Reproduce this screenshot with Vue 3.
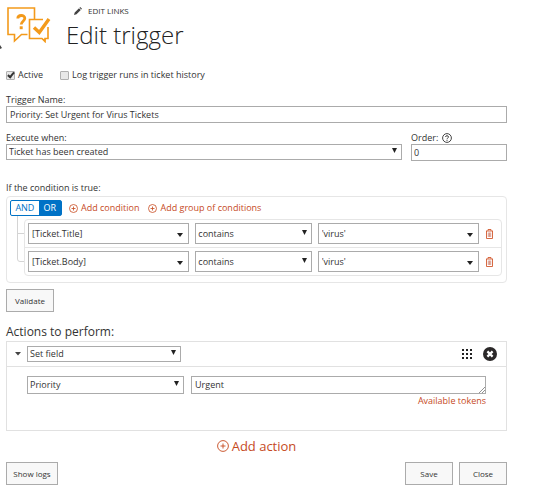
<script setup>
import { ref } from 'vue'

const active = ref(true)
const logRuns = ref(false)
const name = ref('Priority: Set Urgent for Virus Tickets')
const order = ref('0')
const operator = ref('OR')
const actionText = ref('Urgent')
const conditions = ref([
  { id: 1, field: '[Ticket.Title]', test: 'contains', value: "'virus'" },
  { id: 2, field: '[Ticket.Body]', test: 'contains', value: "'virus'" },
])
</script>

<template>
  <main class="page">
    <header class="header">
      <svg class="logo" viewBox="0 0 44 36" fill="none" stroke="#f39a1b" stroke-width="1.6">
        <path d="M20.500 27.500 L14.500 27.500 L7.500 34 L7.500 27.500 L1 27.500 L1 1 L27.500 1 L27.500 12" />
        <path d="M36 12.500 L22.500 12.500 L22.500 31.500 L35 31.500 L38 34.500 L38 31.500 L41 31.500 L41 20" />
        <path d="M35 32 L38.500 35 L38.500 32 Z" fill="#f39a1b" stroke="none" />
        <path d="M10.800 11.500 C10.800 7.600 17.800 7.500 17.800 11.300 C17.800 14.300 14.200 14.200 14.200 17.600" stroke-width="2.800" />
        <path d="M14.200 19.300 V22.200" stroke-width="3" />
        <path d="M27 20.500 L32.300 25.500 L42 12" stroke-width="3.400" />
      </svg>
      <svg class="edge-mark" viewBox="0 0 2 4"><path d="M0 0 L2 3 L0 4 Z" fill="#444" /></svg>
      <div class="heading">
        <a class="edit-links" href="#">
          <svg class="pencil" viewBox="0 0 8 8" fill="#444"><path d="M0 8 L0.700 5.500 L5 1.200 L6.800 3 L2.500 7.300 Z M5.500 0.700 L6.200 0 L8 1.800 L7.300 2.500 Z" /></svg>
          <span>EDIT LINKS</span>
        </a>
        <h1>Edit trigger</h1>
      </div>
    </header>

    <div class="checks">
      <label class="check"><input v-model="active" type="checkbox"><span>Active</span></label>
      <label class="check"><input v-model="logRuns" type="checkbox"><span>Log trigger runs in ticket history</span></label>
    </div>

    <div class="field name-field">
      <label for="trigger-name">Trigger Name:</label>
      <input id="trigger-name" v-model="name" class="box roomy" type="text">
    </div>

    <div class="pair">
      <div class="field grow">
        <label for="execute">Execute when:</label>
        <span class="pick slim">
          <select id="execute" class="box"><option>Ticket has been created</option></select>
          <svg class="arrow" viewBox="0 0 5 5"><path d="M0 0H5L2.500 5Z" /></svg>
        </span>
      </div>
      <div class="field order">
        <label for="order">Order:
          <svg class="help" viewBox="0 0 10 10" fill="none" stroke="#444"><circle cx="5" cy="5" r="4.400" /><path d="M3.500 4C3.500 2.200 6.500 2.300 6.500 4C6.500 5 5 5 5 6.200M5 6.900V7.900" /></svg>
        </label>
        <input id="order" v-model="order" class="box" type="text">
      </div>
    </div>

    <p class="caption">If the condition is true:</p>
    <section class="builder">
      <div class="tools">
        <div class="toggle">
          <button v-for="op in ['AND', 'OR']" :key="op" type="button" :class="{ on: operator === op }" @click="operator = op">{{ op }}</button>
        </div>
        <button v-for="t in ['Add condition', 'Add group of conditions']" :key="t" type="button" class="add">
          <svg viewBox="0 0 9 9" fill="none" stroke="currentColor" stroke-width="0.800"><circle cx="4.500" cy="4.500" r="4" /><path d="M2.500 4.500H6.500M4.500 2.500V6.500" /></svg>
          <span>{{ t }}</span>
        </button>
      </div>
      <div class="tree">
        <svg class="branch" viewBox="0 0 7 46" fill="none" stroke="#d4d4d4"><path d="M0.500 0V43Q0.500 45.500 3 45.500H7M0.500 17.500H7" /></svg>
        <ul class="rules">
          <li v-for="c in conditions" :key="c.id" class="rule">
            <span class="pick wide">
              <select class="box" aria-label="Field"><option>{{ c.field }}</option></select>
              <svg class="arrow" viewBox="0 0 6 4"><path d="M0 0H6L3 4Z" /></svg>
            </span>
            <span class="pick">
              <select class="box" aria-label="Comparison"><option>{{ c.test }}</option></select>
              <svg class="arrow" viewBox="0 0 5 5"><path d="M0 0H5L2.500 5Z" /></svg>
            </span>
            <span class="pick wide">
              <select class="box" aria-label="Value"><option>{{ c.value }}</option></select>
              <svg class="arrow" viewBox="0 0 6 4"><path d="M0 0H6L3 4Z" /></svg>
            </span>
            <button type="button" class="trash" aria-label="Delete condition">
              <svg viewBox="0 0 8 10" fill="none" stroke="#d2592f" stroke-width="0.900"><path d="M0.500 2H7.500M2.500 1.800V0.500H5.500V1.800M1 2V9.500H7V2" /><path d="M2.800 3.500V8M4 3.500V8M5.200 3.500V8" stroke="#c6705c" stroke-width="0.700" /></svg>
            </button>
          </li>
        </ul>
      </div>
    </section>

    <button type="button" class="btn">Validate</button>

    <h2>Actions to perform:</h2>
    <section class="panel">
      <div class="panel-head">
        <button type="button" class="fold" aria-label="Collapse action"><svg viewBox="0 0 6 4"><path d="M0 0H6L3 3.500Z" fill="#444" /></svg></button>
        <span class="pick slim kind">
          <select class="box" aria-label="Action type"><option>Set field</option></select>
          <svg class="arrow" viewBox="0 0 5 5"><path d="M0 0H5L2.500 5Z" /></svg>
        </span>
        <button type="button" class="drag" aria-label="Move action">
          <svg viewBox="0 0 10 10" fill="#222"><path d="M0 0h2v2h-2zM4 0h2v2h-2zM8 0h2v2h-2zM0 4h2v2h-2zM4 4h2v2h-2zM8 4h2v2h-2zM0 8h2v2h-2zM4 8h2v2h-2zM8 8h2v2h-2z" /></svg>
        </button>
        <button type="button" class="remove" aria-label="Remove action">
          <svg viewBox="0 0 14 14"><circle cx="7" cy="7" r="7" fill="#2b2829" /><path d="M4.400 4.400L9.600 9.600M9.600 4.400L4.400 9.600" stroke="#fff" stroke-width="2.200" /></svg>
        </button>
      </div>
      <div class="panel-body">
        <span class="pick target">
          <select class="box" aria-label="Field to set"><option>Priority</option></select>
          <svg class="arrow" viewBox="0 0 5 5"><path d="M0 0H5L2.500 5Z" /></svg>
        </span>
        <div class="value">
          <textarea v-model="actionText" class="box" rows="1" aria-label="New value"></textarea>
          <svg class="grip" viewBox="0 0 6 6" stroke="#777" stroke-width="0.800"><path d="M0 6L6 0M3 6L6 3" /></svg>
          <a href="#">Available tokens</a>
        </div>
      </div>
    </section>

    <button type="button" class="add add-action">
      <svg viewBox="0 0 12 12" fill="none" stroke="currentColor" stroke-width="0.900"><circle cx="6" cy="6" r="5.400" /><path d="M3.500 6H8.500M6 3.500V8.500" /></svg>
      <span>Add action</span>
    </button>

    <footer class="footer">
      <button type="button" class="btn logs">Show logs</button>
      <button type="button" class="btn">Save</button>
      <button type="button" class="btn">Close</button>
    </footer>
  </main>
</template>

<style>
body {
  background: #fff;
}
</style>

<style scoped>
* {
  box-sizing: border-box;
}
.page {
  padding: 5px 35px 16px 6px;
  font: 9px/14px "Open Sans", "Noto Sans", sans-serif;
  color: #333;
}
svg {
  display: block;
  flex: none;
}
button,
input,
select,
textarea {
  font: inherit;
  color: inherit;
  margin: 0;
}
button {
  padding: 0;
  border: 0;
  background: none;
  cursor: pointer;
}
a {
  color: inherit;
  text-decoration: none;
}
.header {
  display: flex;
  gap: 15px;
}
.logo {
  width: 44px;
  height: 36px;
  margin: 2px 0 0 1px;
}
.edge-mark {
  position: absolute;
  left: 0;
  top: 45px;
  width: 2px;
  height: 4px;
}
.edit-links {
  display: flex;
  align-items: center;
  gap: 6px;
  height: 12px;
  padding-left: 8px;
  font-size: 8px;
}
.pencil {
  width: 8px;
  height: 8px;
}
h1 {
  margin: 0;
  font-size: 24px;
  font-weight: 300;
  line-height: 36px;
  color: #222;
}
.checks {
  display: flex;
  gap: 17px;
  margin-top: 15px;
}
.check {
  display: flex;
  align-items: center;
  gap: 3px;
}
.check input {
  position: relative;
  width: 9px;
  height: 9px;
  border: 1px solid #b0b0b0;
  border-radius: 1px;
  background: #e8e8e8;
  appearance: none;
}
.check input:checked::before {
  content: "";
  box-sizing: border-box;
  position: absolute;
  left: 2px;
  top: -1px;
  width: 4px;
  height: 7px;
  border: solid #333;
  border-width: 0 2px 2px 0;
  transform: rotate(40deg);
}
.field {
  display: flex;
  flex-direction: column;
}
.field label {
  display: flex;
  align-items: center;
  gap: 4px;
  height: 13px;
}
.name-field {
  margin-top: 11px;
}
.pair {
  display: flex;
  gap: 9px;
  margin-top: 8px;
}
.grow {
  flex: 1;
}
.order {
  width: 96px;
}
.help {
  width: 10px;
  height: 10px;
}
.box {
  display: block;
  width: 100%;
  height: 17px;
  padding: 0 2px;
  border: 1px solid #ababab;
  border-radius: 0;
  background: #fff;
  appearance: none;
  outline: none;
}
.box.roomy {
  padding: 0 3px;
}
.pick {
  position: relative;
  display: block;
}
.slim .box {
  height: 16px;
}
.arrow {
  position: absolute;
  right: 5px;
  top: 50%;
  width: 5px;
  height: 5px;
  margin-top: -4px;
  fill: #222;
  pointer-events: none;
}
.caption {
  margin: 20px 0 1px;
}
.builder {
  padding: 3px 4px 6px 3px;
  border: 1px solid #e6e6e6;
  border-radius: 4px;
}
.tools {
  display: flex;
  align-items: center;
  height: 16px;
  gap: 9px;
}
.toggle {
  display: flex;
  width: 52px;
  height: 16px;
  margin-right: -2px;
  border: 1px solid #0072c6;
  border-radius: 2px;
}
.toggle button {
  flex: 5;
  color: #0072c6;
}
.toggle .on {
  flex: 4;
  background: #0072c6;
  color: #fff;
}
.add {
  display: flex;
  align-items: center;
  gap: 3px;
  color: #c64a1e;
}
.add svg {
  width: 9px;
  height: 9px;
}
.tree {
  display: flex;
  padding-left: 7px;
}
.branch {
  width: 7px;
  height: 46px;
}
.rules {
  flex: 1;
  margin: 3px 0 0;
  padding: 0;
  list-style: none;
  border: 1px solid #e6e6e6;
  border-radius: 4px;
}
.rule {
  display: grid;
  grid-template-columns: 161fr 116fr 161fr 9px;
  align-items: center;
  gap: 6px;
  padding: 3px 7px 3px 3px;
}
.rule + .rule {
  border-top: 1px solid #e6e6e6;
}
.rule .box {
  height: 21px;
}
.wide .arrow {
  right: 6px;
  width: 6px;
  height: 4px;
  margin-top: -1px;
}
.wide .box {
  padding: 0 3px;
}
.trash svg {
  width: 9px;
  height: 10px;
}
.btn {
  display: block;
  min-width: 48px;
  height: 23px;
  border: 1px solid #ababab;
  background: #f8f8f8;
  font-size: 8px;
}
.builder + .btn {
  margin-top: 6px;
}
h2 {
  margin: 11px 0 0;
  font-size: 12px;
  font-weight: 400;
  line-height: 18px;
}
.panel {
  border: 1px solid #e1e1e1;
}
.panel-head {
  display: flex;
  align-items: center;
  height: 25px;
  padding: 0 9px 0 8px;
  border-bottom: 1px solid #e1e1e1;
}
.fold {
  width: 12px;
}
.fold svg {
  width: 6px;
  height: 4px;
}
.kind {
  width: 154px;
}
.drag {
  margin: 0 11px 0 auto;
}
.drag svg {
  width: 10px;
  height: 10px;
}
.remove svg {
  width: 14px;
  height: 14px;
}
.panel-body {
  display: flex;
  align-items: flex-start;
  gap: 7px;
  min-height: 63px;
  padding: 9px 20px;
}
.target {
  width: 157px;
}
.panel-body .box {
  height: 18px;
}
.value {
  position: relative;
  flex: 1;
  display: flex;
  flex-direction: column;
  align-items: flex-end;
}
.value .box {
  padding: 1px 3px;
  resize: none;
  overflow: hidden;
}
.grip {
  position: absolute;
  right: 1px;
  top: 11px;
  width: 6px;
  height: 6px;
}
.value a {
  color: #c64a1e;
}
.add-action {
  margin: 6px auto 0;
  font-size: 13px;
  line-height: 18px;
}
.add-action svg {
  width: 12px;
  height: 12px;
}
.footer {
  display: flex;
  gap: 6px;
  margin-top: 7px;
}
.logs {
  min-width: 52px;
  margin-right: auto;
}
</style>
